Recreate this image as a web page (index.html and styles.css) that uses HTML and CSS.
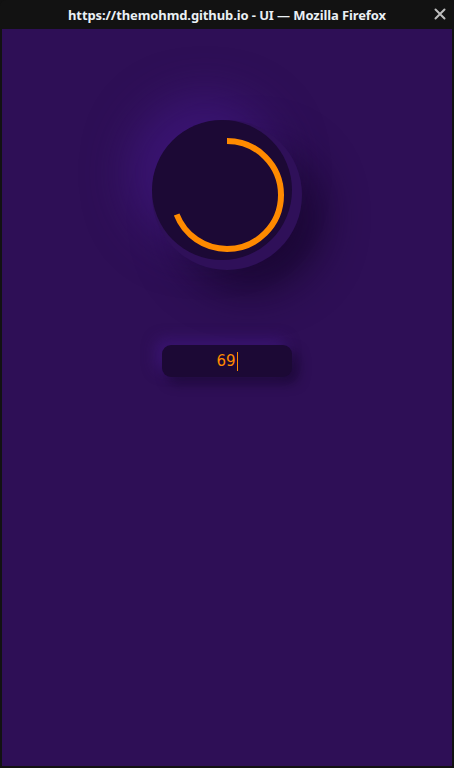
FILE: index.html
```html
<!DOCTYPE html>
<html>
<head>
<meta charset="utf-8">
<link rel="stylesheet" href="styles.css">
</head>
<body>
<div class="window">
  <div class="titlebar">
    <span class="title">https://themohmd.github.io - UI — Mozilla Firefox</span>
    <svg class="close" width="12" height="12" viewBox="0 0 12 12">
      <path d="M1.5 1.5 L10.5 10.5 M10.5 1.5 L1.5 10.5" stroke="#bdbdbd" stroke-width="2" stroke-linecap="round"/>
    </svg>
  </div>
  <main class="content">
    <div class="dial">
      <div class="dial-face"></div>
      <svg class="dial-arc" width="150" height="150" viewBox="0 0 150 150">
        <circle cx="75" cy="75" r="54" fill="none" stroke="#ff8a00" stroke-width="6" stroke-dasharray="234.1 400" transform="rotate(-90 75 75)"/>
      </svg>
    </div>
    <div class="field"><span class="value">69</span><span class="caret"></span></div>
  </main>
</div>
</body>
</html>
```
FILE: styles.css
```css
html, body {
  margin: 0;
  padding: 0;
  background: #111111;
}
.window {
  width: 454px;
  height: 768px;
  display: flex;
  flex-direction: column;
  background: #121212;
  border-radius: 6px 6px 0 0;
  overflow: hidden;
}
.titlebar {
  height: 29px;
  flex: none;
  display: flex;
  align-items: center;
  justify-content: center;
  position: relative;
}
.title {
  font-family: "Noto Sans", "DejaVu Sans", sans-serif;
  font-weight: 700;
  font-size: 13px;
  letter-spacing: -0.1px;
  color: #eaf0f4;
  padding-top: 1px;
}
.close {
  position: absolute;
  right: 8px;
  top: 8px;
}
.content {
  flex: 1;
  margin: 0 2px 2px 2px;
  background: #2e0f56;
  display: flex;
  flex-direction: column;
  align-items: center;
  padding-top: 91px;
  overflow: hidden;
}
.dial {
  position: relative;
  width: 150px;
  height: 150px;
  border-radius: 50%;
  background: #2f1059;
  box-shadow: -22px -22px 45px rgba(70, 25, 140, 0.55), 22px 22px 40px rgba(20, 6, 40, 0.75);
}
.dial-face {
  width: 140px;
  height: 140px;
  border-radius: 50%;
  background: #1c0935;
}
.dial-arc {
  position: absolute;
  left: 0;
  top: 0;
}
.field {
  margin-top: 75px;
  width: 130px;
  height: 32px;
  border-radius: 9px;
  background: #1c0935;
  display: flex;
  align-items: center;
  justify-content: center;
  box-shadow: -6px -6px 14px rgba(70, 25, 140, 0.5), 6px 6px 12px rgba(20, 6, 40, 0.6);
}
.value {
  font-family: "DejaVu Sans", sans-serif;
  font-size: 15px;
  color: #ff8a00;
  line-height: 19px;
}
.caret {
  display: inline-block;
  width: 1px;
  height: 19px;
  background: #ff8a00;
  margin-left: 1px;
}
```
